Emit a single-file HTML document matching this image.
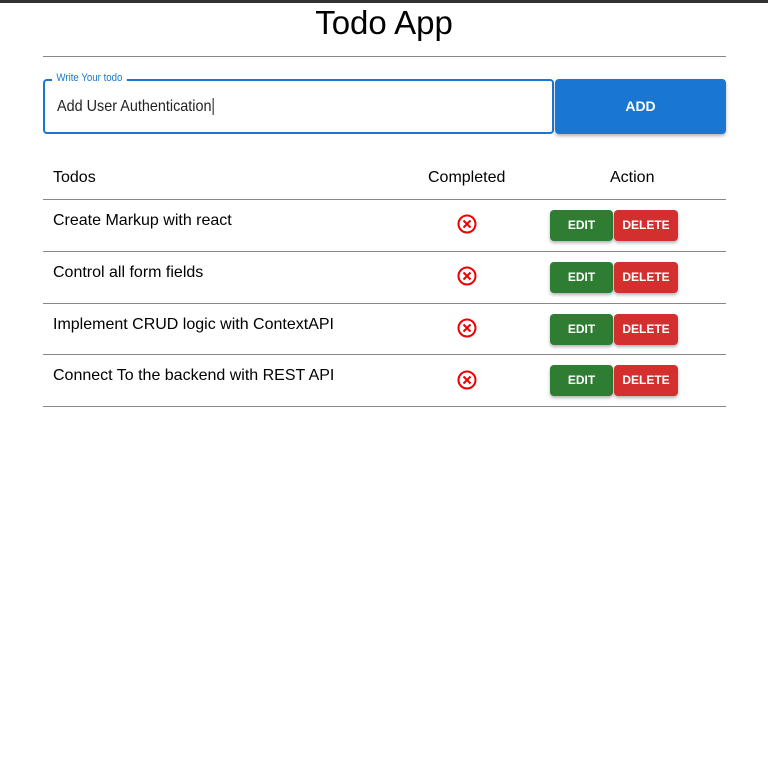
<!DOCTYPE html>
<html><head><style>
body{margin:0;width:768px;height:768px;background:#fff;font-family:"Liberation Sans",sans-serif;position:relative;overflow:hidden}
.a{position:absolute}
.bar{left:0;top:0;width:768px;height:3px;background:#333}
h1{position:absolute;margin:0;left:0;width:768px;text-align:center;top:4px;font-size:33px;font-weight:normal;color:#000}
.hr{left:43px;width:683px;height:1px;background:#888}
.inp{left:43px;top:79px;width:507px;height:51px;border:2px solid #1976d2;border-radius:4px}
.lbl{left:52px;top:72px;background:#fff;padding:0 5px;font-size:11px;color:#1976d2;transform:scaleX(.88);transform-origin:left}
.val{left:57px;top:98px;font-size:16px;color:#222;transform:scaleX(.9);transform-origin:left}
.add{left:555px;top:79px;width:171px;height:55px;background:#1976d2;border-radius:4px;color:#fff;font-size:14px;font-weight:bold;text-align:center;line-height:55px;box-shadow:0 2px 3px rgba(0,0,0,.3)}
.t{font-size:16px;color:#000}
.btn{height:31px;border-radius:4px;color:#fff;font-size:12px;font-weight:bold;text-align:center;line-height:31px;box-shadow:0 2px 3px rgba(0,0,0,.3)}
.e{left:550px;width:63px;background:#2e7d32}
.d{left:614px;width:64px;background:#d32f2f}
</style></head><body>
<div class="a bar"></div>
<h1>Todo App</h1>
<div class="a hr" style="top:56px"></div>
<div class="a inp"></div>
<div class="a lbl">Write Your todo</div>
<div class="a val">Add User Authentication<span style="border-left:1px solid #000;margin-left:1px"></span></div>
<div class="a add">ADD</div>
<div class="a t" style="left:53px;top:169px">Todos</div>
<div class="a t" style="left:428px;top:169px">Completed</div>
<div class="a t" style="left:610px;top:169px">Action</div>
<div class="a hr" style="top:199px"></div>

<div class="a t" style="left:53px;top:212px">Create Markup with react</div>
<svg class="a" style="left:457px;top:214px" width="20" height="20" viewBox="0 0 20 20"><circle cx="10" cy="10" r="8.5" fill="none" stroke="#e00" stroke-width="2"/><path d="M6.5 6.5L13.5 13.5M13.5 6.5L6.5 13.5" stroke="#e00" stroke-width="2"/></svg>
<div class="a btn e" style="top:210px">EDIT</div><div class="a btn d" style="top:210px">DELETE</div>
<div class="a hr" style="top:251px"></div>

<div class="a t" style="left:53px;top:264px">Control all form fields</div>
<svg class="a" style="left:457px;top:266px" width="20" height="20" viewBox="0 0 20 20"><circle cx="10" cy="10" r="8.5" fill="none" stroke="#e00" stroke-width="2"/><path d="M6.5 6.5L13.5 13.5M13.5 6.5L6.5 13.5" stroke="#e00" stroke-width="2"/></svg>
<div class="a btn e" style="top:262px">EDIT</div><div class="a btn d" style="top:262px">DELETE</div>
<div class="a hr" style="top:303px"></div>

<div class="a t" style="left:53px;top:316px">Implement CRUD logic with ContextAPI</div>
<svg class="a" style="left:457px;top:318px" width="20" height="20" viewBox="0 0 20 20"><circle cx="10" cy="10" r="8.5" fill="none" stroke="#e00" stroke-width="2"/><path d="M6.5 6.5L13.5 13.5M13.5 6.5L6.5 13.5" stroke="#e00" stroke-width="2"/></svg>
<div class="a btn e" style="top:314px">EDIT</div><div class="a btn d" style="top:314px">DELETE</div>
<div class="a hr" style="top:354px"></div>

<div class="a t" style="left:53px;top:367px">Connect To the backend with REST API</div>
<svg class="a" style="left:457px;top:370px" width="20" height="20" viewBox="0 0 20 20"><circle cx="10" cy="10" r="8.5" fill="none" stroke="#e00" stroke-width="2"/><path d="M6.5 6.5L13.5 13.5M13.5 6.5L6.5 13.5" stroke="#e00" stroke-width="2"/></svg>
<div class="a btn e" style="top:365px">EDIT</div><div class="a btn d" style="top:365px">DELETE</div>
<div class="a hr" style="top:406px"></div>
</body></html>
